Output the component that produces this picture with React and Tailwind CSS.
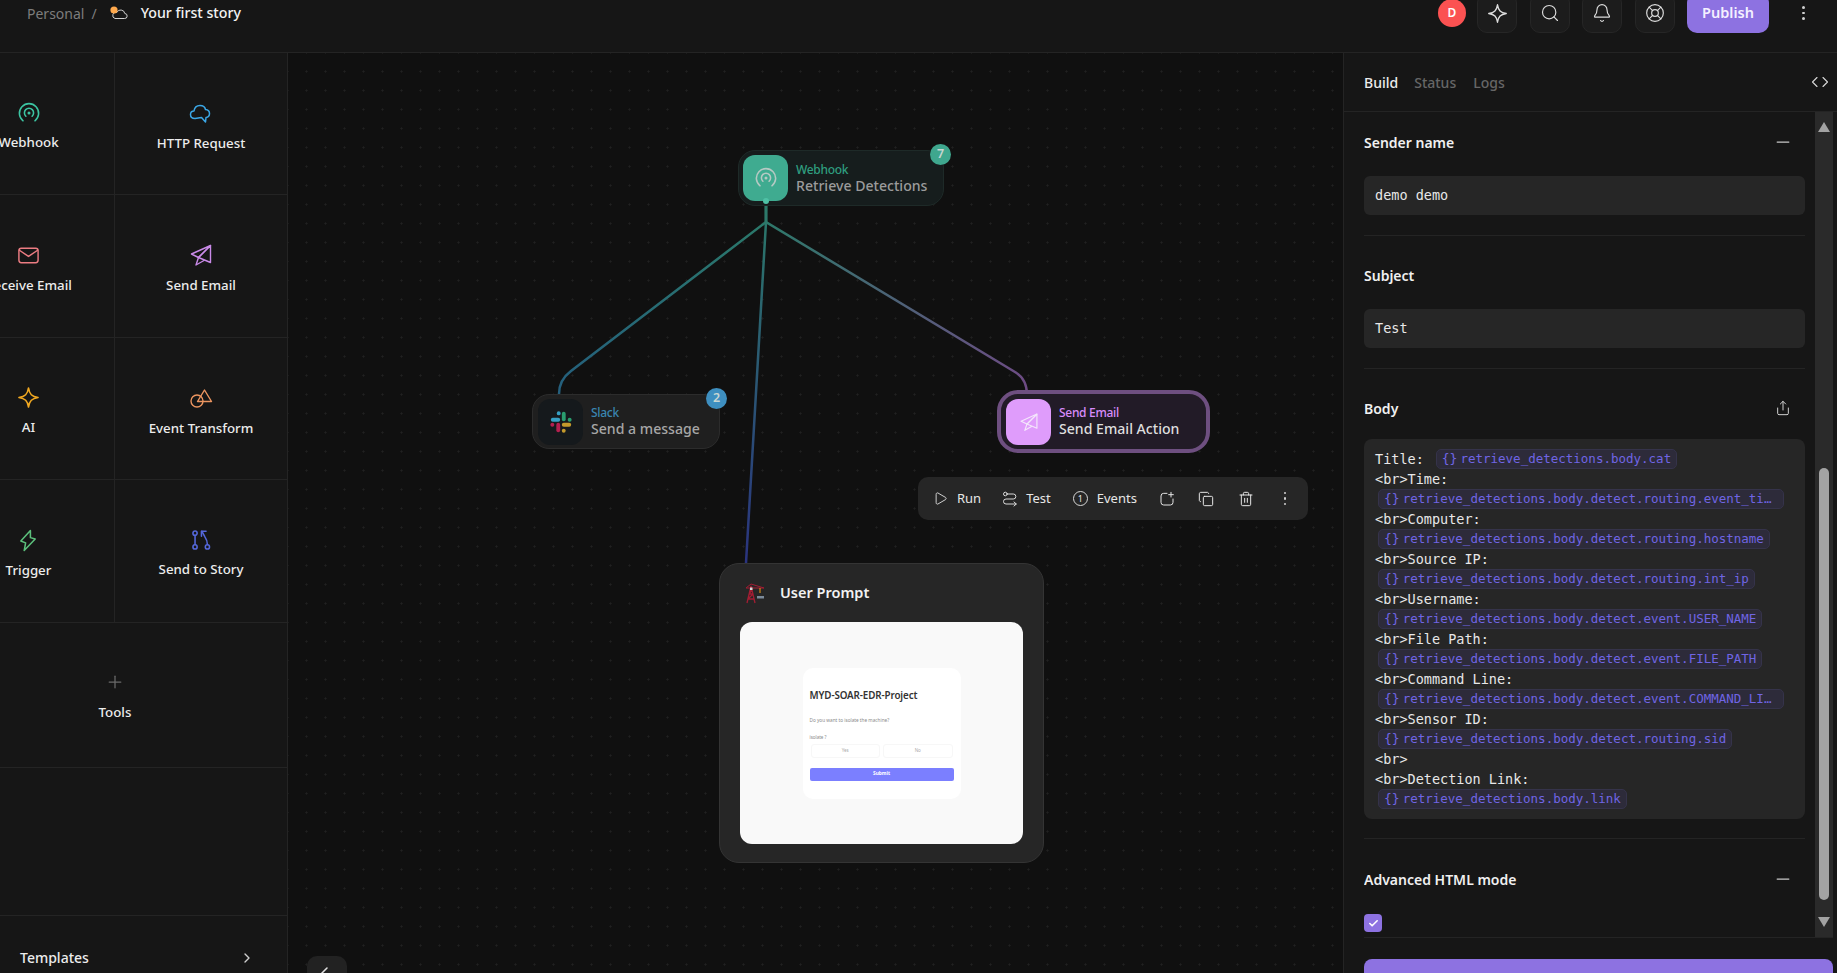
import React from "react";
import { Search, Bell, LifeBuoy, Plus, ChevronRight, Minus, Share, Play, Copy, Trash2, Check, ArrowLeft, Code } from "lucide-react";

const mono = "[font-family:'DejaVu_Sans_Mono',monospace]";

function Svg({ className, children, sw = 1.6 }) {
    return (
        <svg viewBox="0 0 24 24" fill="none" stroke="currentColor" strokeWidth={sw} strokeLinecap="round" strokeLinejoin="round" className={className}>
            {children}
        </svg>
    );
}

const WebhookIcon = ({ className }) => (
    <Svg className={className} sw={1.7}>
        <path d="M5.5 20.5a10.5 10.5 0 1 1 13 0" />
        <path d="M8.6 15.5a5 5 0 1 1 6.8 0" />
        <circle cx="12" cy="12" r="0.8" fill="currentColor" />
    </Svg>
);
const CloudIcon = ({ className }) => (
    <Svg className={className} sw={1.5}>
        <path d="M6 17.5c-3 0-4.5-2-4.5-4s1.500-3.500 3.500-3.500c.5-3.500 3-5.500 6-5.500s5 1.500 5.500 4c2.500.2 4 1.800 4 4s-1.500 3.800-3.500 4l-.5 4.500-4-4.500z" />
    </Svg>
);
const MailIcon = ({ className }) => (
    <Svg className={className} sw={1.5}>
        <rect x="2" y="4.500" width="20" height="15" rx="2.500" />
        <path d="M2.500 6.500 12 13l9.500-6.500" />
    </Svg>
);
const PlaneIcon = ({ className }) => (
    <Svg className={className} sw={1.4}>
        <path d="M21.500 2.500 2.500 11l7 3.500 12-12z" />
        <path d="M21.500 2.500v17l-12-5z" />
        <path d="M9.500 14.500 7 22l8-4.500" />
    </Svg>
);
const StarIcon = ({ className }) => (
    <Svg className={className} sw={1.6}>
        <path d="M12 2c1 6.500 3.500 9 10 10-6.500 1-9 3.500-10 10-1-6.500-3.500-9-10-10 6.500-1 9-3.500 10-10z" />
    </Svg>
);
const ShapesIcon = ({ className }) => (
    <Svg className={className} sw={1.4}>
        <circle cx="8" cy="15" r="6" />
        <path d="M15.500 4 22.500 15.500H8.500z" />
    </Svg>
);
const BoltIcon = ({ className }) => (
    <Svg className={className} sw={1.6}>
        <path d="M14 1.500 4 12.500l5 2-1.500 8L19 10.500l-5-1.500z" />
    </Svg>
);
const StoryIcon = ({ className }) => (
    <Svg className={className} sw={1.7}>
        <circle cx="5.500" cy="4.500" r="2.300" />
        <circle cx="5.500" cy="19.500" r="2.300" />
        <circle cx="19" cy="19.500" r="2.300" />
        <path d="M5.500 7v10" />
        <path d="M19 17c0-4-1-6-3-9l-3-5.500" />
        <path d="M12.500 8V2.500h5" />
    </Svg>
);
const SunCloud = () => (
    <svg viewBox="0 0 18 14" className="w-[18px] h-[14px]" fill="none">
        <path d="M5 12.500h9.500a2.500 2.500 0 0 0 .3-5 4.200 4.200 0 0 0-8-1A3 3 0 0 0 5 12.500z" stroke="#cfcfcf" strokeWidth="1" />
        <circle cx="4" cy="4" r="3.600" fill="#ffa94d" />
    </svg>
);
const SlackLogo = () => (
    <svg viewBox="0 0 24 24" className="w-[22px] h-[22px]" fill="none" strokeLinecap="round" strokeWidth="4.200">
        <path d="M3 9.500h6" stroke="#36a0c4" />
        <path d="M9.500 2.500v.1" stroke="#36a0c4" />
        <path d="M15 3v6" stroke="#2a9d6f" />
        <path d="M21.500 9.500h-.1" stroke="#2a9d6f" />
        <path d="M15 15h6" stroke="#c49a2b" />
        <path d="M15 21.500v-.1" stroke="#c49a2b" />
        <path d="M9 15v6" stroke="#b5204f" />
        <path d="M2.500 15h.1" stroke="#b5204f" />
    </svg>
);
const CraneIcon = () => (
    <svg viewBox="0 0 20 21" className="w-[20px] h-[21px]" fill="none">
        <path d="M2 20 6 3l4 17M3 16h6M4 11h4M5 7h2M3 16l5-5M4 11l3-4" stroke="#a31d33" strokeWidth="1.300" />
        <path d="M1 5 6 1l13 4H1z" stroke="#a31d33" strokeWidth="1" />
        <rect x="5" y="4.500" width="2.500" height="2.500" fill="#d9d9d9" />
        <path d="M15 5v5" stroke="#f39c12" strokeWidth="1" />
        <rect x="12" y="13" width="7" height="2.500" fill="#7c8a99" />
    </svg>
);
const TestIcon = ({ className }) => (
    <Svg className={className} sw={1.4}>
        <circle cx="5" cy="4.500" r="2.700" />
        <path d="M8 4.500h9a3.500 3.500 0 0 1 0 7.500H6a3.700 3.700 0 0 0 0 7.500h15" />
        <path d="m18 16.500 3.500 3-3.500 3" />
    </Svg>
);
const SharePlus = ({ className }) => (
    <Svg className={className} sw={1.5}>
        <path d="M12 3.500H7a4 4 0 0 0-4 4V17a4 4 0 0 0 4 4h10a4 4 0 0 0 4-4v-5" />
        <path d="M18 2v7M14.500 5.500h7" />
    </Svg>
);
const Dots = ({ className }) => (
    <div className={`flex flex-col items-center gap-[3px] ${className || ""}`}>
        <span className="w-[2.500px] h-[2.500px] rounded-full bg-[#d0d0d0]" />
        <span className="w-[2.500px] h-[2.500px] rounded-full bg-[#d0d0d0]" />
        <span className="w-[2.500px] h-[2.500px] rounded-full bg-[#d0d0d0]" />
    </div>
);

function ToolCell({ icon, label, divider, height }) {
    return (
        <div className={`w-[172px] flex flex-col items-center justify-center pt-[6px] gap-[8px] ${height} ${divider ? "border-r border-[#242424]" : ""}`}>
            {icon}
            <span className="text-[13.300px] font-medium leading-[20px] text-[#ececec] whitespace-nowrap">{label}</span>
        </div>
    );
}

const toolRows = [
    { h: "h-[141px]", cells: [
        { label: "Webhook", icon: <WebhookIcon className="w-[22px] h-[22px] text-[#3cc4a2]" /> },
        { label: "HTTP Request", icon: <CloudIcon className="w-[24px] h-[24px] text-[#3ba7e6]" /> },
    ] },
    { h: "h-[142px]", cells: [
        { label: "Receive Email", icon: <MailIcon className="w-[23px] h-[23px] text-[#ec7c82]" /> },
        { label: "Send Email", icon: <PlaneIcon className="w-[24px] h-[24px] text-[#c98ae8]" /> },
    ] },
    { h: "h-[141px]", cells: [
        { label: "AI", icon: <StarIcon className="w-[23px] h-[23px] text-[#f2a921]" /> },
        { label: "Event Transform", icon: <ShapesIcon className="w-[24px] h-[24px] text-[#ec9560]" /> },
    ] },
    { h: "h-[142px]", cells: [
        { label: "Trigger", icon: <BoltIcon className="w-[23px] h-[23px] text-[#5cc07c]" /> },
        { label: "Send to Story", icon: <StoryIcon className="w-[22px] h-[22px] text-[#5568dc]" /> },
    ] },
];

function Sidebar() {
    return (
        <aside className="w-[288px] shrink-0 border-r border-[#242424] flex flex-col overflow-hidden">
            <div className="-ml-[57px] w-[344px] flex flex-col shrink-0">
                {toolRows.map((row) => (
                    <div key={row.cells[0].label} className="flex border-b border-[#242424]">
                        <ToolCell {...row.cells[0]} divider height={row.h} />
                        <ToolCell {...row.cells[1]} height={row.h} />
                    </div>
                ))}
                <div className="h-[145px] border-b border-[#242424] flex flex-col items-center justify-center pt-[4px] gap-[10px]">
                    <Plus className="w-[20px] h-[20px] text-[#6a6a6a]" strokeWidth={1.5} />
                    <span className="text-[13.300px] font-medium leading-[20px] text-[#ececec]">Tools</span>
                </div>
                <div className="h-[148px] border-b border-[#242424]" />
            </div>
            <div className="flex items-center justify-between pl-[20px] pr-[32px] pt-[31px]">
                <span className="text-[14px] font-medium leading-[22px] text-[#ececec]">Templates</span>
                <ChevronRight className="w-[16px] h-[16px] text-[#d0d0d0]" />
            </div>
        </aside>
    );
}

function FlowNode({ className, tile, tileBg, type, typeColor, name, nameColor, badge, badgeBg }) {
    return (
        <div className={`absolute flex items-center ${className}`}>
            <div className={`w-[45px] h-[46px] rounded-[12px] flex items-center justify-center shrink-0 ${tileBg}`}>{tile}</div>
            <div className="ml-[8px] flex flex-col">
                <span className={`text-[12px] font-medium leading-[15px] tracking-[-0.3px] ${typeColor}`}>{type}</span>
                <span className={`text-[14.100px] font-medium leading-[18px] whitespace-nowrap ${nameColor}`}>{name}</span>
            </div>
            {badge && (
                <span className={`absolute -top-[7px] -right-[8px] w-[21px] h-[21px] rounded-full flex items-center justify-center text-[12.500px] font-semibold text-[#c9d6d2] ${badgeBg}`}>{badge}</span>
            )}
        </div>
    );
}

function Toolbar() {
    return (
        <div className="absolute left-[630px] top-[424px] w-[390px] h-[43px] rounded-[10px] bg-[#262626] flex items-center pl-[15px] text-[13px] text-[#e6e6e6]">
            <Play className="w-[15px] h-[15px]" strokeWidth={1.4} />
            <span className="ml-[9px]">Run</span>
            <TestIcon className="w-[16px] h-[16px] ml-[21px]" />
            <span className="ml-[8px]">Test</span>
            <span className="w-[15px] h-[15px] ml-[22px] rounded-full border border-[#d8d8d8] flex items-center justify-center text-[9px] leading-none">1</span>
            <span className="ml-[9px]">Events</span>
            <SharePlus className="w-[16px] h-[16px] ml-[22px]" />
            <Copy className="w-[16px] h-[16px] ml-[23px]" strokeWidth={1.5} />
            <Trash2 className="w-[16px] h-[16px] ml-[24px]" strokeWidth={1.5} />
            <Dots className="ml-[30px]" />
        </div>
    );
}

function PromptCard() {
    return (
        <div className="absolute left-[431px] top-[510px] w-[325px] h-[300px] rounded-[20px] bg-[#262626] border border-[#343434] flex flex-col px-[20px]">
            <div className="flex items-center h-[58px] pl-[5px]">
                <CraneIcon />
                <span className="ml-[15px] text-[14.500px] font-semibold text-[#f2f2f2]">User Prompt</span>
            </div>
            <div className="w-[283px] h-[222px] rounded-[12px] bg-[#f9f9f9] flex items-center justify-center">
                <div className="w-[158px] h-[131px] rounded-[10px] bg-white flex flex-col px-[7px] pt-[21px]">
                    <span className="text-[9.800px] font-semibold leading-[14px] text-[#333] whitespace-nowrap tracking-[-0.1px]">MYD-SOAR-EDR-Project</span>
                    <span className="mt-[14px] text-[4.700px] leading-[6px] text-[#8a8a8a] whitespace-nowrap">Do you want to isolate the machine?</span>
                    <span className="mt-[11px] text-[4.500px] leading-[6px] text-[#8a8a8a]">isolate ?</span>
                    <div className="mt-[4px] flex gap-[3px] px-[1px]">
                        <span className="w-[70px] h-[14px] rounded-[3px] border border-[#f7f7f7] flex items-center justify-center text-[4.500px] text-[#aaa]">Yes</span>
                        <span className="w-[70px] h-[14px] rounded-[3px] border border-[#f7f7f7] flex items-center justify-center text-[4.500px] text-[#aaa]">No</span>
                    </div>
                    <div className="mt-[10px] h-[13px] rounded-[2px] bg-[#7b7fff] flex items-center justify-center text-[4.800px] font-bold text-white">Submit</div>
                </div>
            </div>
        </div>
    );
}

function Canvas() {
    return (
        <div className="relative flex-1 min-w-0 overflow-hidden bg-[#101010] bg-[radial-gradient(#212121_0.9px,transparent_1.2px)] bg-[size:19px_19px] bg-[position:9px_9px]">
            <svg className="absolute inset-0 w-full h-full" fill="none" strokeWidth="2.500">
                <defs>
                    <linearGradient id="edgeLeft" gradientUnits="userSpaceOnUse" x1="478" y1="150" x2="271" y2="341">
                        <stop offset="0" stopColor="#2b7a69" />
                        <stop offset="1" stopColor="#245f7d" />
                    </linearGradient>
                    <linearGradient id="edgeMid" gradientUnits="userSpaceOnUse" x1="478" y1="150" x2="458" y2="510">
                        <stop offset="0" stopColor="#2b7a69" />
                        <stop offset="1" stopColor="#2a337f" />
                    </linearGradient>
                    <linearGradient id="edgeRight" gradientUnits="userSpaceOnUse" x1="478" y1="150" x2="739" y2="342">
                        <stop offset="0" stopColor="#2b7a69" />
                        <stop offset="1" stopColor="#6f4a85" />
                    </linearGradient>
                </defs>
                <path d="M478 148V169L283 318Q271 327 271 341" stroke="url(#edgeLeft)" />
                <path d="M478 148V169L458 510" stroke="url(#edgeMid)" />
                <path d="M478 148V169L727 319Q739 326 739 342" stroke="url(#edgeRight)" />
            </svg>
            <FlowNode
                className="left-[450px] top-[97px] w-[206px] h-[56px] pl-[4px] rounded-[17px] bg-[#161d1d] border border-[#1e2a28]"
                tile={<WebhookIcon className="w-[22px] h-[22px] text-[#b5c9c3]" />}
                tileBg="bg-[#3fab90]"
                type="Webhook"
                typeColor="text-[#2f9e7f]"
                name="Retrieve Detections"
                nameColor="text-[#9b9b9b]"
                badge="7"
                badgeBg="bg-[#3fa78e]"
            />
            <span className="absolute left-[475px] top-[145px] w-[6px] h-[6px] rounded-full bg-[#4fc1a5]" />
            <FlowNode
                className="left-[244px] top-[341px] w-[188px] h-[55px] pl-[5px] rounded-[17px] bg-[#1f1f1f] border border-[#2c2c2c]"
                tile={<SlackLogo />}
                tileBg="bg-[#15191c]"
                type="Slack"
                typeColor="text-[#3a85b0]"
                name="Send a message"
                nameColor="text-[#a6a6a6]"
                badge="2"
                badgeBg="bg-[#3e8fc0]"
            />
            <FlowNode
                className="left-[709px] top-[337px] w-[213px] h-[63px] pl-[5px] rounded-[21px] bg-[#221b27] border-[4px] border-[#6e4f80]"
                tile={<PlaneIcon className="w-[20px] h-[20px] text-[#f4e6fb]" />}
                tileBg="bg-[#df9cfb]"
                type="Send Email"
                typeColor="text-[#d88cfb]"
                name="Send Email Action"
                nameColor="text-[#dedede]"
            />
            <Toolbar />
            <PromptCard />
            <div className="absolute left-[19px] top-[903px] w-[40px] h-[40px] rounded-[10px] bg-[#222] flex justify-center pt-[7px]">
                <ArrowLeft className="w-[24px] h-[24px] text-[#e0e0e0]" strokeWidth={1.5} />
            </div>
        </div>
    );
}

function Chip({ children, wide }) {
    return (
        <span className={`inline-flex items-center h-[20px] rounded-[5px] bg-[#2d2b3a] border border-[#35334a] pl-[5px] pr-[5px] text-[12.500px] text-[#7065e4] align-top whitespace-nowrap ${wide ? "w-[406px]" : ""}`}>
            <span className="mr-[3px] text-[13px]">{"{}"}</span>
            {children}
        </span>
    );
}

const bodyLines = [
    ["<br>Time:", "retrieve_detections.body.detect.routing.event_ti…", true],
    ["<br>Computer:", "retrieve_detections.body.detect.routing.hostname"],
    ["<br>Source IP:", "retrieve_detections.body.detect.routing.int_ip"],
    ["<br>Username:", "retrieve_detections.body.detect.event.USER_NAME"],
    ["<br>File Path:", "retrieve_detections.body.detect.event.FILE_PATH"],
    ["<br>Command Line:", "retrieve_detections.body.detect.event.COMMAND_LI…", true],
    ["<br>Sensor ID:", "retrieve_detections.body.detect.routing.sid"],
];

function SectionHead({ title, children, className }) {
    return (
        <div className={`flex items-center justify-between h-[22px] pr-[12px] ${className}`}>
            <span className="text-[14px] font-semibold text-[#f0f0f0]">{title}</span>
            {children}
        </div>
    );
}

const CollapseIcon = () => <Minus className="w-[20px] h-[20px] text-[#c8c8c8]" strokeWidth={1.5} />;

function RightPanel() {
    return (
        <aside className="w-[494px] shrink-0 border-l border-[#242424] flex flex-col">
            <div className="h-[59px] shrink-0 border-b border-[#242424] flex items-center pl-[20px] pr-[8px] text-[14px] font-medium">
                <span className="text-[#ececec]">Build</span>
                <span className="ml-[16px] text-[#666]">Status</span>
                <span className="ml-[17px] text-[#666]">Logs</span>
                <Code className="ml-auto w-[18px] h-[18px] text-[#d8d8d8]" strokeWidth={1.5} />
            </div>
            <div className="ml-[20px] mr-[4px] h-[826px] shrink-0 flex border-b border-[#242424] overflow-hidden">
                <div className="w-[451px] pr-[10px] flex flex-col">
                    <div className="pt-[19px] pb-[20px] border-b border-[#242424]">
                        <SectionHead title="Sender name" className="mb-[23px]"><CollapseIcon /></SectionHead>
                        <div className={`h-[39px] rounded-[6px] bg-[#262626] flex items-center px-[11px] text-[13.500px] text-[#e8e8e8] ${mono}`}>demo demo</div>
                    </div>
                    <div className="pt-[28px] pb-[20px] border-b border-[#242424]">
                        <SectionHead title="Subject" className="mb-[23px]" />
                        <div className={`h-[39px] rounded-[6px] bg-[#262626] flex items-center px-[11px] text-[13.500px] text-[#e8e8e8] ${mono}`}>Test</div>
                    </div>
                    <div className="pt-[28px] pb-[19px] border-b border-[#242424]">
                        <SectionHead title="Body" className="mb-[20px]">
                            <span className="w-[20px] flex justify-center"><Share className="w-[16px] h-[16px] text-[#d0d0d0]" strokeWidth={1.5} /></span>
                        </SectionHead>
                        <div className={`h-[380px] rounded-[8px] bg-[#262626] pl-[11px] pt-[10px] text-[13.500px] leading-[20px] text-[#e8e8e8] overflow-hidden ${mono}`}>
                            <div className="h-[20px] flex">
                                <span>Title:</span>
                                <span className="ml-[12px]"><Chip>retrieve_detections.body.cat</Chip></span>
                            </div>
                            {bodyLines.map(([label, value, wide]) => (
                                <div key={label}>
                                    <div className="h-[20px]">{label}</div>
                                    <div className="h-[20px] pl-[3px]"><Chip wide={wide}>{value}</Chip></div>
                                </div>
                            ))}
                            <div className="h-[20px]">{"<br>"}</div>
                            <div className="h-[20px]">{"<br>Detection Link:"}</div>
                            <div className="h-[20px] pl-[3px]"><Chip>retrieve_detections.body.link</Chip></div>
                        </div>
                    </div>
                    <div className="pt-[29px]">
                        <SectionHead title="Advanced HTML mode" className="mb-[24px]"><CollapseIcon /></SectionHead>
                        <div className="w-[18px] h-[18px] rounded-[4px] bg-[#8d72e1] flex items-center justify-center">
                            <Check className="w-[11px] h-[11px] text-white" strokeWidth={3.5} />
                        </div>
                    </div>
                </div>
                <div className="w-[18px] shrink-0 bg-[#2a2a2a] flex flex-col items-center">
                    <div className="h-[30px] shrink-0 flex items-center justify-center">
                        <svg viewBox="0 0 12 10" className="w-[12px] h-[10px]"><path d="M6 0 12 10H0z" fill="#a3a3a3" /></svg>
                    </div>
                    <div className="mt-[326px] w-[10px] h-[432px] shrink-0 rounded-full bg-[#a3a3a3]" />
                    <div className="mt-[17px] shrink-0">
                        <svg viewBox="0 0 12 10" className="w-[12px] h-[10px]"><path d="M0 0H12L6 10z" fill="#a3a3a3" /></svg>
                    </div>
                </div>
            </div>
            <div className="ml-[20px] mr-[4px] mt-[21px] h-[40px] shrink-0 rounded-[8px] bg-[#8d72e1] flex items-center justify-center gap-[8px] text-[14px] font-semibold text-white">
                <Play className="w-[14px] h-[14px]" />
                <span>Test</span>
            </div>
        </aside>
    );
}

function HeaderButton({ children }) {
    return <div className="w-[40px] h-[40px] rounded-[10px] bg-[#1c1c1c] border border-[#262626] flex items-center justify-center text-[#dcdcdc]">{children}</div>;
}

export default function App() {
    return (
        <div className="h-screen w-full overflow-hidden flex flex-col bg-[#161616] text-white [font-family:'Noto_Sans',sans-serif]">
            <header className="h-[53px] shrink-0 border-b border-[#242424] overflow-hidden">
                <div className="-mt-[7px] h-[40px] flex items-center pl-[27px] pr-[32px]">
                    <span className="text-[14px] text-[#7d7d7d]">Personal</span>
                    <span className="ml-[7px] text-[14px] text-[#7d7d7d]">/</span>
                    <span className="ml-[13px]"><SunCloud /></span>
                    <span className="ml-[13px] text-[14.200px] font-medium text-[#f2f2f2]">Your first story</span>
                    <div className="ml-auto flex items-center gap-[12.500px]">
                        <span className="-mr-[1.500px] w-[28px] h-[28px] rounded-full bg-[#fb5252] flex items-center justify-center text-[12px] font-semibold text-white">D</span>
                        <HeaderButton><StarIcon className="w-[21px] h-[21px]" /></HeaderButton>
                        <HeaderButton><Search className="w-[20px] h-[20px]" strokeWidth={1.4} /></HeaderButton>
                        <HeaderButton><Bell className="w-[20px] h-[20px]" strokeWidth={1.4} /></HeaderButton>
                        <HeaderButton><LifeBuoy className="w-[20px] h-[20px]" strokeWidth={1.4} /></HeaderButton>
                        <div className="w-[82px] h-[40px] rounded-[10px] bg-[#8d72e1] flex items-center justify-center text-[14.500px] font-semibold text-[#f4f0ff]">Publish</div>
                    </div>
                    <Dots className="ml-[33px] w-[3px]" />
                </div>
            </header>
            <div className="flex flex-1 min-h-0">
                <Sidebar />
                <Canvas />
                <RightPanel />
            </div>
        </div>
    );
}
